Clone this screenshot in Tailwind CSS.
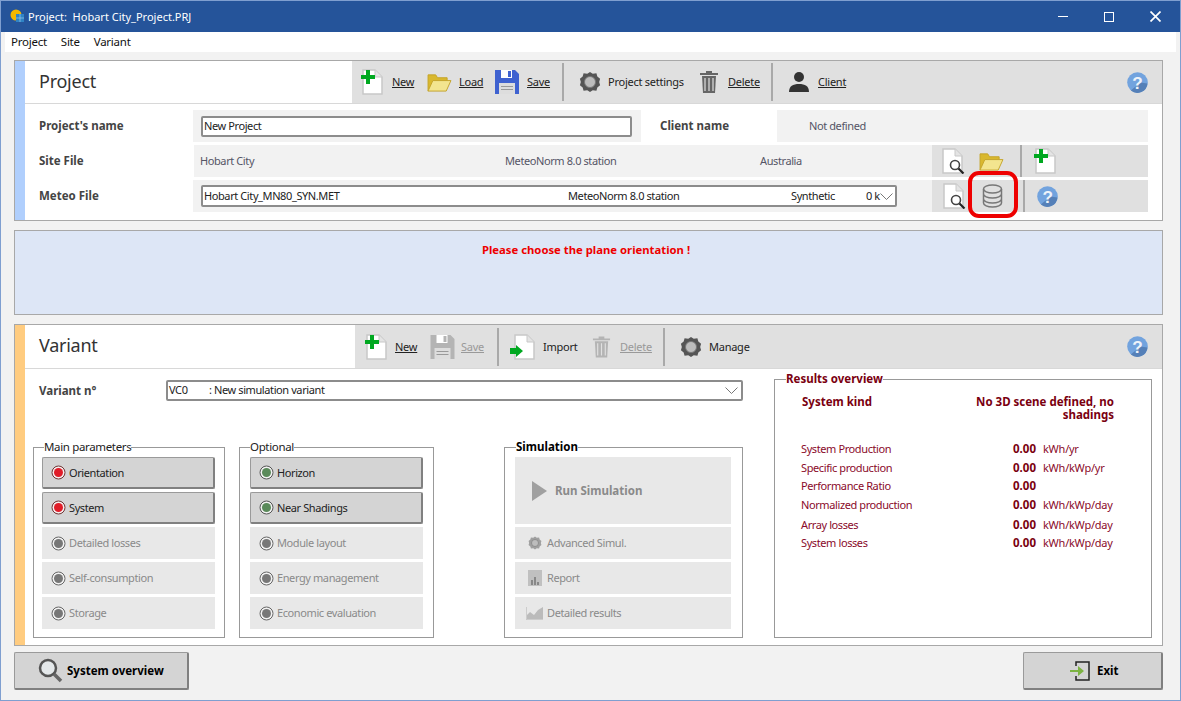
<!DOCTYPE html>
<html><head><meta charset="utf-8"><script src="https://cdn.jsdelivr.net/npm/@tailwindcss/browser@4"></script></head>
<body class="m-0 bg-[#f2f2f2]">
<svg class="hidden" width="0" height="0">
<defs>
<symbol id="doc" viewBox="0 0 24 26"><path d="M3 1h12l7 7v17H3z" fill="#fff" stroke="#c8c8c8" stroke-width="1.5"/><path d="M15 1v7h7" fill="#e4e4e4" stroke="#c8c8c8"/></symbol>
<symbol id="docplus" viewBox="0 0 24 26"><path d="M3 1h12l7 7v17H3z" fill="#fff" stroke="#c8c8c8" stroke-width="1.5"/><path d="M15 1v7h7" fill="#e4e4e4" stroke="#c8c8c8"/><path d="M6 1h4v5h5v4h-5v5H6v-5H1V6h5z" fill="#00a820"/></symbol>
<symbol id="folder" viewBox="0 0 26 22"><path d="M1 20V3h8l2 3h10v4" fill="#d9b82e" stroke="#c4a42a"/><path d="M1 20l5-11h19l-5 11z" fill="#f3e58f" stroke="#c4a42a"/></symbol>
<symbol id="floppy" viewBox="0 0 24 26"><path d="M0 1h20l4 4v20H0z" fill="currentColor"/><path d="M6 1h11v8H6z" fill="#fff"/><path d="M13 2h3v6h-3z" fill="currentColor"/><path d="M4 14h16v11H4z" fill="#ddd"/><path d="M6 17h12v1H6zm0 3h12v1H6z" fill="#999"/></symbol>
<symbol id="gear" viewBox="0 0 24 24"><path d="M12 1l3 2 4-.5 1 3.500 3 2.500-1 3.500 1 3.500-3 2.500-1 3.500-4-.5-3 2-3-2-4 .5-1-3.500-3-2.500 1-3.500-1-3.500 3-2.500 1-3.500 4 .5z" fill="currentColor"/><circle cx="12" cy="12" r="6" fill="#bdbdbd"/><circle cx="12" cy="12" r="6" fill="none" stroke="#777"/></symbol>
<symbol id="trash" viewBox="0 0 20 24"><path d="M7 1h6v2h6v2H1V3h6z" fill="currentColor"/><path d="M3 6h14l-1 17H4z" fill="currentColor"/><path d="M6 8v13M10 8v13M14 8v13" stroke="#e0e0e0" stroke-width="1.200"/></symbol>
<symbol id="help" viewBox="0 0 22 22"><circle cx="11" cy="11" r="10.800" fill="#72a3de"/><path d="M21.500 12A10.800 10.800 0 0 1 4 19.500L14 11z" fill="#5580b8"/><text x="11" y="17.500" text-anchor="middle" font-family="Liberation Sans" font-weight="700" font-size="18" fill="#eef3fa">?</text></symbol>
<symbol id="docmag" viewBox="0 0 24 26"><path d="M2 1h12l7 7v17H2z" fill="#fff" stroke="#c8c8c8" stroke-width="1.5"/><path d="M14 1v7h7" fill="#e4e4e4" stroke="#c8c8c8"/><circle cx="14" cy="17" r="4.500" fill="#fff" stroke="#444" stroke-width="1.600"/><path d="M17.500 20.500l5 5" stroke="#222" stroke-width="2.200"/></symbol>
<symbol id="led-red" viewBox="0 0 15 15"><circle cx="7.500" cy="7.500" r="6.500" fill="#f6eeee" stroke="#6e3535"/><circle cx="7.500" cy="7.500" r="4.500" fill="#e01c28"/></symbol>
<symbol id="led-green" viewBox="0 0 15 15"><circle cx="7.500" cy="7.500" r="6.500" fill="#f2f2f2" stroke="#555"/><circle cx="7.500" cy="7.500" r="4.500" fill="#5a8a5a"/></symbol>
<symbol id="led-gray" viewBox="0 0 15 15"><circle cx="7.500" cy="7.500" r="6.500" fill="#f2f2f2" stroke="#666"/><circle cx="7.500" cy="7.500" r="4.500" fill="#777"/></symbol>
</defs></svg>

<div class="w-[1181px] h-[701px] overflow-hidden flex flex-col border border-[#7f9fd0] bg-[#f2f2f2] text-[11px] tracking-[-0.4px] leading-[16px] text-[#222] font-['Noto_Sans',sans-serif]">
  <div class="h-[31px] shrink-0 bg-[#25549a] flex items-center text-white">
    <svg class="ml-[9px] mr-[4px] w-[14px] h-[16px]" viewBox="0 0 14 16"><circle cx="6" cy="6" r="5.500" fill="#f5b800"/><path d="M6 5h8v8H6z" fill="#2f83c5"/><path d="M10 5v8M6 9h8" stroke="#9cc8e8" stroke-width=".7"/></svg>
    <span class="text-[11px] tracking-normal">Project:&nbsp; Hobart City_Project.PRJ</span>
    <div class="ml-auto flex items-center">
      <span class="w-[10px] h-[1px] bg-white mr-[36px]"></span>
      <span class="w-[10px] h-[10px] border border-white mr-[36px]"></span>
      <svg class="w-[11px] h-[11px] mr-[19px]" viewBox="0 0 11 11"><path d="M.5.5l10 10M10.500.5l-10 10" stroke="#fff" stroke-width="1.700"/></svg>
    </div>
  </div>
  <div class="h-[20px] shrink-0 mx-[4px] bg-white flex items-center gap-[14px] pl-[6px] text-[#111] text-[11.5px] tracking-[-0.25px]">
    <span>Project</span><span>Site</span><span>Variant</span>
  </div>

  <div class="flex-1 flex flex-col pl-[13px] pr-[17px] pt-[8px]">
    <section class="h-[161px] shrink-0 border border-[#a8a8a8] flex bg-white">
      <div class="w-[10px] bg-[#b0cffd]"></div>
      <div class="flex-1 flex flex-col">
        <div class="h-[43px] shrink-0 border-b border-[#d8d8d8] flex">
          <div class="w-[327px] flex items-center pl-[14px] pb-[2px] text-[18px] tracking-[-0.25px] text-[#333]">Project</div>
          <div class="flex-1 bg-[#e0e0e0] flex items-center text-[#222] tracking-[-0.25px]">
            <svg class="ml-[8px] w-[24px] h-[26px]"><use href="#docplus"/></svg>
            <span class="ml-[8px] w-[22px] underline underline-offset-1 decoration-1">New</span>
            <svg class="ml-[13px] w-[25px] h-[21px]"><use href="#folder"/></svg>
            <span class="ml-[7px] w-[23px] underline underline-offset-1 decoration-1">Load</span>
            <svg class="ml-[13px] w-[24px] h-[26px] text-[#3f62d0]"><use href="#floppy"/></svg>
            <span class="ml-[8px] w-[23px] underline underline-offset-1 decoration-1">Save</span>
            <span class="ml-[12px] w-[2px] h-[38px] bg-[#a9a9a9]"></span>
            <svg class="ml-[15px] w-[22px] h-[22px] text-[#555]"><use href="#gear"/></svg>
            <span class="ml-[7px] w-[77px] whitespace-nowrap">Project settings</span>
            <svg class="ml-[14px] w-[20px] h-[24px] text-[#666]"><use href="#trash"/></svg>
            <span class="ml-[9px] w-[31px] underline underline-offset-1 decoration-1">Delete</span>
            <span class="ml-[12px] w-[2px] h-[38px] bg-[#a9a9a9]"></span>
            <svg class="ml-[15px] w-[22px] h-[22px]" viewBox="0 0 22 22"><circle cx="11" cy="6" r="5" fill="#333"/><path d="M1 21c0-6 4-8 10-8s10 2 10 8z" fill="#333"/></svg>
            <span class="ml-[8px] underline underline-offset-1 decoration-1">Client</span>
            <svg class="ml-auto mr-[14px] w-[21px] h-[21px]"><use href="#help"/></svg>
          </div>
        </div>
        <div class="flex flex-col gap-[3px] pt-[6px] pr-[14px] relative">
          <div class="h-[32px] flex items-center">
            <span class="w-[168px] pl-[14px] font-bold text-[11.5px] tracking-normal text-[#444]">Project's name</span>
            <div class="w-[448px] h-[32px] bg-[#f2f2f2] flex items-center pl-[8px]">
              <div class="w-[431px] h-[21px] bg-white border-2 border-[#8c8c8c] rounded-[2px] flex items-center pl-[1px] text-[#222]">New Project</div>
            </div>
            <span class="w-[136px] pl-[19px] font-bold text-[11.5px] tracking-normal text-[#444]">Client name</span>
            <div class="flex-1 h-[32px] bg-[#f2f2f2] flex items-center pl-[32px] text-[#556]">Not defined</div>
          </div>
          <div class="h-[32px] flex items-center">
            <span class="w-[169px] pl-[14px] font-bold text-[11.5px] tracking-normal text-[#444]">Site File</span>
            <div class="flex-1 h-[32px] bg-[#f2f2f2] flex items-center pl-[6px] text-[#556]">
              <span class="w-[305px]">Hobart City</span><span class="w-[255px]">MeteoNorm 8.0 station</span><span>Australia</span>
              <div class="ml-auto w-[216px] h-[32px] bg-[#e0e0e0] flex items-center">
                <svg class="ml-[9px] w-[24px] h-[26px]"><use href="#docmag"/></svg>
                <svg class="ml-[14px] w-[25px] h-[21px]"><use href="#folder"/></svg>
                <span class="ml-[16px] w-[2px] h-[32px] bg-[#a9a9a9]"></span>
                <svg class="ml-[11px] w-[24px] h-[26px]"><use href="#docplus"/></svg>
              </div>
            </div>
          </div>
          <div class="h-[32px] flex items-center">
            <span class="w-[168px] pl-[14px] font-bold text-[11.5px] tracking-normal text-[#444]">Meteo File</span>
            <div class="flex-1 h-[32px] bg-[#f2f2f2] flex items-center pl-[8px]">
              <div class="w-[696px] h-[22px] bg-white border-2 border-[#8c8c8c] rounded-[2px] flex items-center pl-[1px] text-[#222]">
                <span class="w-[364px]">Hobart City_MN80_SYN.MET</span><span class="w-[223px]">MeteoNorm 8.0 station</span><span class="w-[75px]">Synthetic</span><span class="w-[12px] whitespace-nowrap">0 k</span>
                <svg class="ml-[2px] w-[13px] h-[7px]" viewBox="0 0 13 7"><path d="M.5.500l6 6 6-6" fill="none" stroke="#777"/></svg>
              </div>
              <div class="ml-auto w-[216px] h-[32px] bg-[#e0e0e0] flex items-center relative">
                <svg class="ml-[10px] w-[24px] h-[26px]"><use href="#docmag"/></svg>
                <svg class="ml-[16px] w-[21px] h-[24px]" viewBox="0 0 21 24" fill="none" stroke="#777" stroke-width="1.500"><ellipse cx="10.500" cy="5" rx="9" ry="4"/><path d="M1.500 5v14c0 2.200 4 4 9 4s9-1.800 9-4V5M1.500 10c0 2.200 4 4 9 4s9-1.800 9-4M1.500 15c0 2.200 4 4 9 4s9-1.800 9-4"/></svg>
                <span class="ml-[20px] w-[2px] h-[32px] bg-[#a9a9a9]"></span>
                <svg class="ml-[12px] w-[21px] h-[21px]"><use href="#help"/></svg>
                <div class="absolute left-[36px] top-[-9px] w-[50px] h-[47px] border-[4px] border-[#ee0000] rounded-[11px]"></div>
              </div>
            </div>
          </div>
        </div>
      </div>
    </section>

    <div class="mt-[9px] h-[85px] shrink-0 border border-[#a8a8a8] bg-[#dde6f6] flex justify-center pt-[11px] pr-[5px] font-bold text-[11.3px] tracking-normal text-[#ee0000]">Please choose the plane orientation !</div>

    <section class="mt-[9px] h-[322px] shrink-0 border border-[#a8a8a8] flex bg-white">
      <div class="w-[10px] bg-[#ffcc80]"></div>
      <div class="flex-1 flex flex-col">
        <div class="h-[44px] shrink-0 border-b border-[#d8d8d8] flex">
          <div class="w-[330px] flex items-center pl-[14px] pb-[3px] text-[18px] tracking-[-0.25px] text-[#333]">Variant</div>
          <div class="flex-1 bg-[#e0e0e0] flex items-center tracking-[-0.25px]">
            <svg class="ml-[9px] w-[24px] h-[26px]"><use href="#docplus"/></svg>
            <span class="ml-[7px] w-[23px] underline underline-offset-1 decoration-1">New</span>
            <svg class="ml-[12px] w-[25px] h-[26px] text-[#b4b4b4]"><use href="#floppy"/></svg>
            <span class="ml-[6px] w-[24px] text-[#999] underline underline-offset-1 decoration-1">Save</span>
            <span class="ml-[12px] w-[2px] h-[38px] bg-[#a9a9a9]"></span>
            <span class="ml-[13px] relative w-[24px] h-[26px] block">
              <svg class="w-[24px] h-[26px]"><use href="#doc"/></svg>
              <svg class="absolute left-[-2px] top-[11px] w-[13px] h-[12px]" viewBox="0 0 13 12"><path d="M0 3h6V0l7 6-7 6V9H0z" fill="#00a820"/></svg>
            </span>
            <span class="ml-[7px] w-[33px]">Import</span>
            <svg class="ml-[16px] w-[19px] h-[24px] text-[#b4b4b4]"><use href="#trash"/></svg>
            <span class="ml-[9px] w-[31px] text-[#999] underline underline-offset-1 decoration-1">Delete</span>
            <span class="ml-[12px] w-[2px] h-[38px] bg-[#a9a9a9]"></span>
            <svg class="ml-[15px] w-[22px] h-[22px] text-[#555]"><use href="#gear"/></svg>
            <span class="ml-[7px]">Manage</span>
            <svg class="ml-auto mr-[14px] w-[21px] h-[21px]"><use href="#help"/></svg>
          </div>
        </div>
        <div class="flex-1 flex pl-[8px]">
          <div class="w-[710px] flex flex-col">
            <div class="flex items-center h-[21px] mt-[11px]">
              <span class="w-[133px] pl-[6px] font-bold text-[11.5px] tracking-normal text-[#444]">Variant n°</span>
              <div class="w-[577px] h-[21px] bg-white border-2 border-[#8c8c8c] rounded-[2px] flex items-center pl-[1px] pb-[1px] text-[#222]">
                <span class="w-[40px]">VC0</span><span>: New simulation variant</span>
                <svg class="ml-auto mr-[3px] w-[13px] h-[7px]" viewBox="0 0 13 7"><path d="M.5.500l6 6 6-6" fill="none" stroke="#777"/></svg>
              </div>
            </div>
            <div class="flex mt-[46px]">
              <div class="relative w-[192px] h-[191px] border border-[#999] flex flex-col gap-[3px] pt-[9px] pl-[8px]">
                <span class="absolute left-[10px] top-[-9px] bg-white text-[#222] text-[11.5px] tracking-[-0.35px]">Main parameters</span>
                <div class="w-[173px] h-[32px] bg-[#d4d4d4] border border-[#9a9a9a] border-b-2 border-r-2 border-b-[#808080] border-r-[#808080] rounded-[2px] flex items-center pl-[8px] gap-[3px]"><svg class="w-[15px] h-[15px]"><use href="#led-red"/></svg>Orientation</div>
                <div class="w-[173px] h-[32px] bg-[#d4d4d4] border border-[#9a9a9a] border-b-2 border-r-2 border-b-[#808080] border-r-[#808080] rounded-[2px] flex items-center pl-[8px] gap-[3px]"><svg class="w-[15px] h-[15px]"><use href="#led-red"/></svg>System</div>
                <div class="w-[173px] h-[32px] bg-[#e8e8e8] flex items-center pl-[9px] gap-[3px] text-[#8a8a8a]"><svg class="w-[15px] h-[15px]"><use href="#led-gray"/></svg>Detailed losses</div>
                <div class="w-[173px] h-[32px] bg-[#e8e8e8] flex items-center pl-[9px] gap-[3px] text-[#8a8a8a]"><svg class="w-[15px] h-[15px]"><use href="#led-gray"/></svg>Self-consumption</div>
                <div class="w-[173px] h-[32px] bg-[#e8e8e8] flex items-center pl-[9px] gap-[3px] text-[#8a8a8a]"><svg class="w-[15px] h-[15px]"><use href="#led-gray"/></svg>Storage</div>
              </div>
              <div class="relative ml-[14px] w-[195px] h-[191px] border border-[#999] flex flex-col gap-[3px] pt-[9px] pl-[10px]">
                <span class="absolute left-[10px] top-[-9px] bg-white text-[#222] text-[11.5px] tracking-[-0.35px]">Optional</span>
                <div class="w-[173px] h-[32px] bg-[#d4d4d4] border border-[#9a9a9a] border-b-2 border-r-2 border-b-[#808080] border-r-[#808080] rounded-[2px] flex items-center pl-[8px] gap-[3px]"><svg class="w-[15px] h-[15px]"><use href="#led-green"/></svg>Horizon</div>
                <div class="w-[173px] h-[32px] bg-[#d4d4d4] border border-[#9a9a9a] border-b-2 border-r-2 border-b-[#808080] border-r-[#808080] rounded-[2px] flex items-center pl-[8px] gap-[3px]"><svg class="w-[15px] h-[15px]"><use href="#led-green"/></svg>Near Shadings</div>
                <div class="w-[173px] h-[32px] bg-[#e8e8e8] flex items-center pl-[9px] gap-[3px] text-[#8a8a8a]"><svg class="w-[15px] h-[15px]"><use href="#led-gray"/></svg>Module layout</div>
                <div class="w-[173px] h-[32px] bg-[#e8e8e8] flex items-center pl-[9px] gap-[3px] text-[#8a8a8a]"><svg class="w-[15px] h-[15px]"><use href="#led-gray"/></svg>Energy management</div>
                <div class="w-[173px] h-[32px] bg-[#e8e8e8] flex items-center pl-[9px] gap-[3px] text-[#8a8a8a]"><svg class="w-[15px] h-[15px]"><use href="#led-gray"/></svg>Economic evaluation</div>
              </div>
              <div class="relative ml-[70px] w-[239px] h-[191px] border border-[#999] flex flex-col gap-[3px] pt-[9px] pl-[10px]">
                <span class="absolute left-[11px] top-[-9px] bg-white font-bold text-[11.5px] tracking-normal text-black">Simulation</span>
                <div class="w-[216px] h-[67px] bg-[#e8e8e8] flex items-center pl-[17px] font-bold text-[11.5px] tracking-normal text-[#8a8a8a]"><svg class="w-[15px] h-[20px]" viewBox="0 0 15 20"><path d="M0 0l15 10L0 20z" fill="#a0a0a0"/></svg><span class="ml-[8px]">Run Simulation</span></div>
                <div class="w-[216px] h-[32px] bg-[#e8e8e8] flex items-center pl-[13px] gap-[5px] text-[#8a8a8a]"><svg class="w-[14px] h-[14px] text-[#a0a0a0]"><use href="#gear"/></svg>Advanced Simul.</div>
                <div class="w-[216px] h-[32px] bg-[#e8e8e8] flex items-center pl-[13px] gap-[5px] text-[#8a8a8a]"><svg class="w-[14px] h-[16px]" viewBox="0 0 14 16"><path d="M0 0h14v16H0z" fill="#c0c0c0"/><path d="M3 10h2v5H3zm3-3h2v8H6zm3 5h2v3H9z" fill="#888"/></svg>Report</div>
                <div class="w-[216px] h-[32px] bg-[#e8e8e8] flex items-center pl-[11px] gap-[4px] text-[#8a8a8a]"><svg class="w-[17px] h-[13px]" viewBox="0 0 17 13"><path d="M0 9l4-4 4 3 4-5 5-3v13H0z" fill="#bbb"/><path d="M.5 0v12.500H17" fill="none" stroke="#ccc"/></svg>Detailed results</div>
              </div>
            </div>
          </div>
          <div class="relative ml-[31px] mt-[10px] w-[378px] h-[259px] border border-[#999] text-[#8a0a2a]">
            <span class="absolute left-[11px] top-[-9px] bg-white font-bold text-[11.5px] tracking-normal text-[#7a0010]">Results overview</span>
            <div class="flex font-bold text-[11.5px] tracking-normal text-[#7a0010] pt-[14px] pl-[27px] h-[59px]">
              <span class="w-[172px]">System kind</span>
              <span class="w-[140px] text-right leading-[13px] mt-[1px]">No 3D scene defined, no shadings</span>
            </div>
            <div class="flex items-center h-[19px] pl-[26px]"><span class="w-[187px]">System Production</span><span class="w-[48px] text-right font-bold text-[11.5px] tracking-normal text-[#7a0010]">0.00</span><span class="ml-[7px] tracking-[-0.25px]">kWh/yr</span></div>
            <div class="flex items-center h-[19px] pl-[26px]"><span class="w-[187px]">Specific production</span><span class="w-[48px] text-right font-bold text-[11.5px] tracking-normal text-[#7a0010]">0.00</span><span class="ml-[7px] tracking-[-0.25px]">kWh/kWp/yr</span></div>
            <div class="flex items-center h-[18px] pl-[26px]"><span class="w-[187px]">Performance Ratio</span><span class="w-[48px] text-right font-bold text-[11.5px] tracking-normal text-[#7a0010]">0.00</span></div>
            <div class="flex items-center h-[20px] pl-[26px]"><span class="w-[187px]">Normalized production</span><span class="w-[48px] text-right font-bold text-[11.5px] tracking-normal text-[#7a0010]">0.00</span><span class="ml-[7px] tracking-[-0.25px]">kWh/kWp/day</span></div>
            <div class="flex items-center h-[20px] pl-[26px]"><span class="w-[187px]">Array losses</span><span class="w-[48px] text-right font-bold text-[11.5px] tracking-normal text-[#7a0010]">0.00</span><span class="ml-[7px] tracking-[-0.25px]">kWh/kWp/day</span></div>
            <div class="flex items-center h-[16px] pl-[26px]"><span class="w-[187px]">System losses</span><span class="w-[48px] text-right font-bold text-[11.5px] tracking-normal text-[#7a0010]">0.00</span><span class="ml-[7px] tracking-[-0.25px]">kWh/kWp/day</span></div>
          </div>
        </div>
      </div>
    </section>

    <div class="mt-[6px] flex justify-between">
      <div class="w-[175px] h-[38px] bg-[#d4d4d4] border border-[#9a9a9a] border-b-2 border-r-2 border-b-[#808080] border-r-[#808080] rounded-[2px] flex items-center pl-[23px] gap-[4px] font-bold text-[11.5px] tracking-normal text-black">
        <svg class="w-[25px] h-[25px]" viewBox="0 0 25 25"><circle cx="10" cy="10" r="8" fill="#e4e8ea" stroke="#555" stroke-width="2.500"/><path d="M16 16l7 7" stroke="#666" stroke-width="3.500"/></svg>System overview
      </div>
      <div class="w-[140px] h-[38px] bg-[#d4d4d4] border border-[#9a9a9a] border-b-2 border-r-2 border-b-[#808080] border-r-[#808080] rounded-[2px] flex items-center pl-[46px] gap-[7px] font-bold text-[11.5px] tracking-normal text-black">
        <svg class="w-[20px] h-[20px]" viewBox="0 0 20 20"><path d="M6 5V1h13v18H6v-4" fill="none" stroke="#222" stroke-width="1.500"/><path d="M0 9h8V5l6 5-6 5v-4H0z" fill="#7cb342"/></svg>Exit
      </div>
    </div>
  </div>
</div>
</body></html>
